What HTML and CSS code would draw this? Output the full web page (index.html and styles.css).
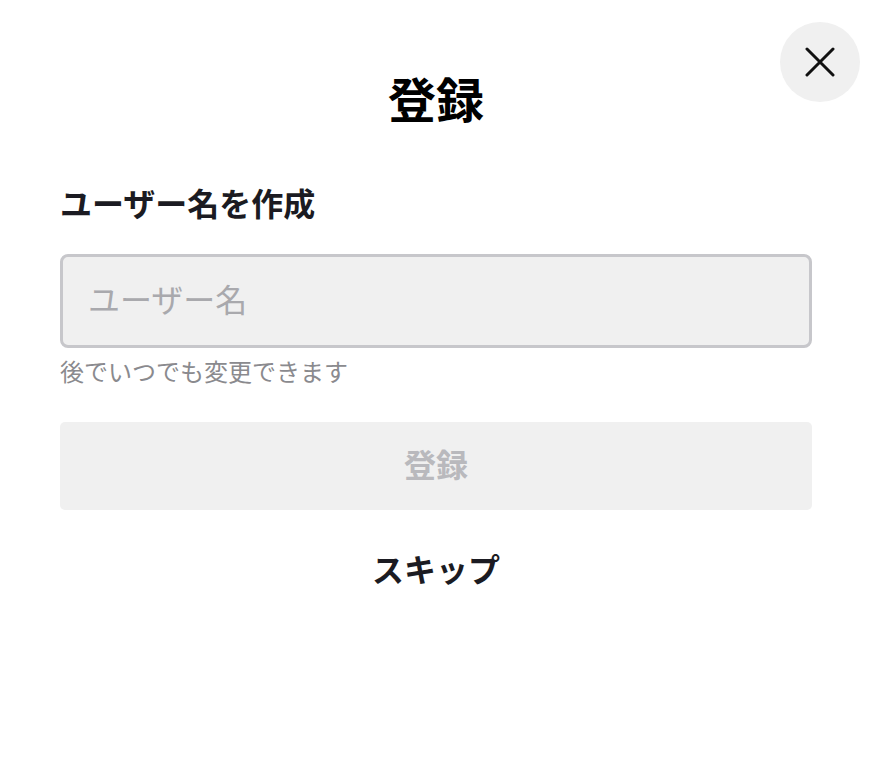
FILE: index.html
```html
<!DOCTYPE html>
<html lang="ja">
<head>
<meta charset="utf-8">
<link rel="stylesheet" href="styles.css">
</head>
<body>
<div class="page">
  <button class="close" aria-label="閉じる">
    <svg width="30" height="30" viewBox="0 0 30 30"><path d="M2 2 L28 28 M28 2 L2 28" stroke="#111" stroke-width="3" stroke-linecap="round" fill="none"/></svg>
  </button>
  <h1 class="title">登録</h1>
  <div class="label">ユーザー名を作成</div>
  <div class="input"><span class="placeholder">ユーザー名</span></div>
  <div class="help">後でいつでも変更できます</div>
  <div class="submit">登録</div>
  <div class="skip">スキップ</div>
</div>
</body>
</html>
```
FILE: styles.css
```css
html, body {
  margin: 0;
  padding: 0;
  background: #fff;
}
body {
  font-family: "Noto Sans CJK JP", "Noto Sans", sans-serif;
}
.page {
  position: relative;
  width: 882px;
  height: 776px;
  box-sizing: border-box;
  padding: 73px 70px 0 60px;
  display: flex;
  flex-direction: column;
}
.close {
  position: absolute;
  top: 22px;
  right: 22px;
  width: 80px;
  height: 80px;
  border-radius: 50%;
  border: none;
  background: #f0f0f0;
  display: flex;
  align-items: center;
  justify-content: center;
  padding: 0;
}
.title {
  margin: 0;
  font-size: 48px;
  line-height: 48px;
  font-weight: 700;
  color: #000;
  text-align: center;
}
.label {
  margin-top: 65px;
  font-size: 32px;
  line-height: 32px;
  font-weight: 700;
  color: #1b1b22;
}
.input {
  margin-top: 36px;
  height: 94px;
  box-sizing: border-box;
  border: 3px solid #c7c7cb;
  border-radius: 8px;
  background: #f0f0f0;
  display: flex;
  align-items: center;
  padding: 0 0 6px 25px;
}
.placeholder {
  font-size: 32px;
  line-height: 32px;
  color: #a9a9ad;
}
.help {
  margin-top: 11px;
  font-size: 24px;
  line-height: 24px;
  color: #8a8a8e;
}
.submit {
  margin-top: 39px;
  height: 88px;
  box-sizing: border-box;
  padding-bottom: 6px;
  border-radius: 5px;
  background: #f0f0f0;
  display: flex;
  align-items: center;
  justify-content: center;
  font-size: 32px;
  font-weight: 700;
  color: #b9b9bd;
}
.skip {
  margin-top: 42px;
  font-size: 32px;
  line-height: 32px;
  font-weight: 700;
  color: #1b1b22;
  text-align: center;
}
```
